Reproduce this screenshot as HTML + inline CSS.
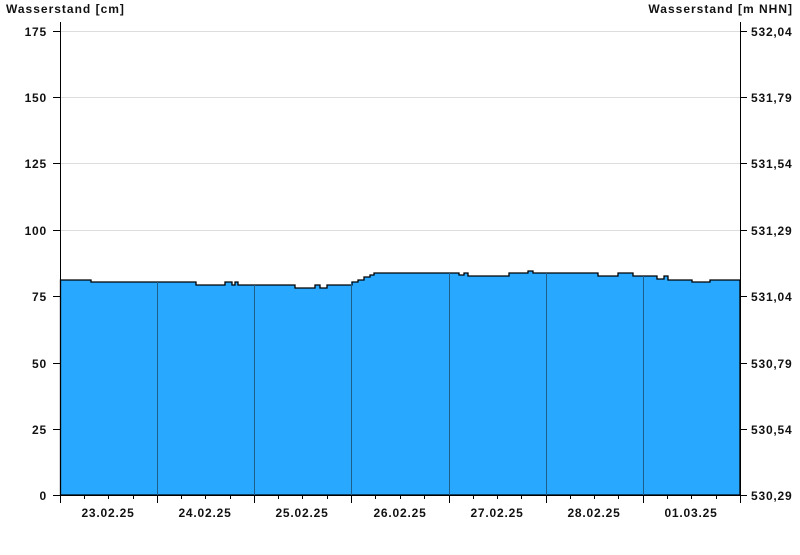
<!DOCTYPE html>
<html><head><meta charset="utf-8"><style>
body{margin:0;background:#fff;width:800px;height:550px;overflow:hidden}
svg text{font-family:"Liberation Sans",Arial,sans-serif;font-weight:bold;font-size:12px;fill:#111;letter-spacing:0.8px}
</style></head><body>
<svg width="800" height="550" xmlns="http://www.w3.org/2000/svg">
<text x="6" y="13" style="letter-spacing:1px">Wasserstand [cm]</text>
<text x="793" y="13" text-anchor="end" style="letter-spacing:1px">Wasserstand [m NHN]</text>
<g stroke="#ddd" stroke-width="1">
<line x1="60" x2="740" y1="31.5" y2="31.5"/><line x1="60" x2="740" y1="97.5" y2="97.5"/>
<line x1="60" x2="740" y1="163.5" y2="163.5"/><line x1="60" x2="740" y1="230.5" y2="230.5"/>
</g>
<path fill="#29a8ff" stroke="#000" stroke-width="1.3" d="M60.5,495 V280 H91 V282 H196 V285 H225 V282 H232 V285 H235 V282 H238 V285 H295 V288 H315 V285 H320 V288 H327 V285 H352 V282 H358 V280 H364 V277 H370 V275 H374 V273 H459 V275 H464 V273 H468 V276 H509 V273 H528 V271 H533 V273 H598 V276 H618 V273 H633 V276 H657 V279 H664 V276 H668 V280 H692 V282 H710 V280 H740 V495 Z"/>
<g stroke="#1d5f8a" stroke-width="1">
<line x1="157.5" x2="157.5" y1="282" y2="495"/><line x1="254.5" x2="254.5" y1="285" y2="495"/>
<line x1="351.5" x2="351.5" y1="282" y2="495"/><line x1="449.5" x2="449.5" y1="273" y2="495"/>
<line x1="546.5" x2="546.5" y1="273" y2="495"/><line x1="643.5" x2="643.5" y1="276" y2="495"/>
</g>
<g stroke="#000" stroke-width="1">
<line x1="60.5" x2="60.5" y1="22" y2="503"/><line x1="740.5" x2="740.5" y1="22" y2="495"/>
<line x1="53" x2="740" y1="495.5" y2="495.5"/>
<line x1="53" x2="60" y1="31.5" y2="31.5"/><line x1="53" x2="60" y1="97.5" y2="97.5"/><line x1="53" x2="60" y1="163.5" y2="163.5"/><line x1="53" x2="60" y1="230.5" y2="230.5"/><line x1="53" x2="60" y1="296.5" y2="296.5"/><line x1="53" x2="60" y1="363.5" y2="363.5"/><line x1="53" x2="60" y1="429.5" y2="429.5"/>
<line x1="740" x2="747" y1="31.5" y2="31.5"/><line x1="740" x2="747" y1="97.5" y2="97.5"/><line x1="740" x2="747" y1="163.5" y2="163.5"/><line x1="740" x2="747" y1="230.5" y2="230.5"/><line x1="740" x2="747" y1="296.5" y2="296.5"/><line x1="740" x2="747" y1="363.5" y2="363.5"/><line x1="740" x2="747" y1="429.5" y2="429.5"/><line x1="740" x2="747" y1="495.5" y2="495.5"/>
<line x1="157.5" x2="157.5" y1="495" y2="503"/><line x1="254.5" x2="254.5" y1="495" y2="503"/><line x1="351.5" x2="351.5" y1="495" y2="503"/><line x1="449.5" x2="449.5" y1="495" y2="503"/><line x1="546.5" x2="546.5" y1="495" y2="503"/><line x1="643.5" x2="643.5" y1="495" y2="503"/><line x1="740.5" x2="740.5" y1="495" y2="503"/>
<path d="M84.5,495v4M108.5,495v4M133.5,495v4M181.5,495v4M205.5,495v4M230.5,495v4M278.5,495v4M302.5,495v4M327.5,495v4M375.5,495v4M400.5,495v4M424.5,495v4M473.5,495v4M497.5,495v4M521.5,495v4M570.5,495v4M594.5,495v4M618.5,495v4M667.5,495v4M691.5,495v4M716.5,495v4"/>
</g>
<g text-anchor="end">
<text x="47" y="36">175</text><text x="47" y="102">150</text><text x="47" y="168">125</text><text x="47" y="235">100</text><text x="47" y="301">75</text><text x="47" y="368">50</text><text x="47" y="434">25</text><text x="47" y="500">0</text>
</g>
<g>
<text x="751" y="36">532,04</text><text x="751" y="102">531,79</text><text x="751" y="168">531,54</text><text x="751" y="235">531,29</text><text x="751" y="301">531,04</text><text x="751" y="368">530,79</text><text x="751" y="434">530,54</text><text x="751" y="500">530,29</text>
</g>
<g text-anchor="middle">
<text x="108" y="517">23.02.25</text><text x="205" y="517">24.02.25</text><text x="302" y="517">25.02.25</text><text x="400" y="517">26.02.25</text><text x="497" y="517">27.02.25</text><text x="594" y="517">28.02.25</text><text x="691" y="517">01.03.25</text>
</g>
</svg>
</body></html>
